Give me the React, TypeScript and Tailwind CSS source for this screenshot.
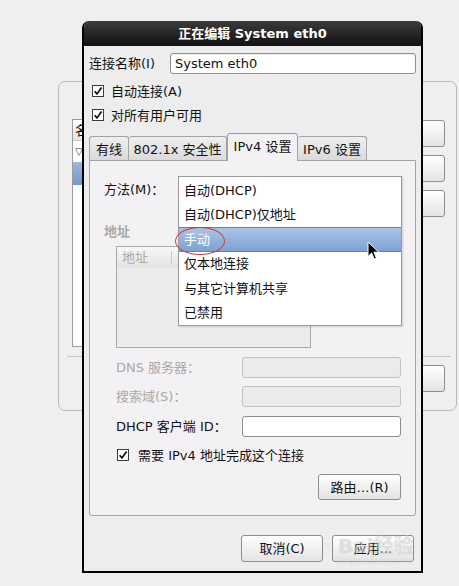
import React from "react";

function Check() {
  return (
    <span className="flex h-[12px] w-[12px] shrink-0 items-center justify-center border border-[#3c3c3c] bg-white">
      <svg width="10" height="10" viewBox="0 0 10 10">
        <path d="M1.6 5.2 L4 7.9 L8.6 1.6" fill="none" stroke="#111" strokeWidth="1.7" />
      </svg>
    </span>
  );
}

function Btn({ label, className = "" }: { label: string; className?: string }) {
  return (
    <div
      className={`flex items-center justify-center rounded-[3px] border border-[#8e8e8e] bg-gradient-to-b from-white to-[#e4e4e4] text-[13px] text-[#111] ${className}`}
    >
      {label}
    </div>
  );
}

const methods = ["自动(DHCP)", "自动(DHCP)仅地址", "手动", "仅本地连接", "与其它计算机共享", "已禁用"];

export default function App() {
  return (
    <div className="relative h-[586px] w-[459px] overflow-hidden bg-[#efefef] font-['DejaVu_Sans','Noto_Sans_CJK_SC',sans-serif] text-[13px] leading-none text-[#111]">
      {/* window behind the dialog */}
      <div className="pl-[58px] pt-[81px]">
        <div className="flex h-[330px] w-[399px] flex-col rounded-[7px] border border-[#b9b9b9]">
          <div className="flex pl-[13px] pt-[37px]">
            <div className="flex h-[228px] w-[300px] flex-col border border-[#9c9c9c] bg-white">
              <div className="flex h-[21px] items-center border-b border-[#c8c8c8] bg-gradient-to-b from-white to-[#e6e6e6] pl-[2px]">名</div>
              <div className="flex h-[21px] items-center pl-[2px] text-[10px] text-[#333]">▽</div>
              <div className="h-[23px] bg-gradient-to-b from-[#9bb8df] to-[#7398cc]" />
            </div>
            <div className="ml-auto mr-[11px] mt-px flex flex-col gap-[8px]">
              <Btn label="添加(A)" className="h-[27px] w-[90px]" />
              <Btn label="编辑..." className="h-[27px] w-[90px]" />
              <Btn label="删除..." className="h-[27px] w-[90px]" />
            </div>
          </div>
          <div className="ml-[8px] mr-[5px] mt-[9px] h-px bg-[#c6c6c6]" />
          <div className="mr-[11px] mt-[8px] flex justify-end">
            <Btn label="关闭(C)" className="h-[27px] w-[90px]" />
          </div>
        </div>
      </div>

      {/* dialog */}
      <div className="absolute left-[82px] top-[21px] flex h-[552px] w-[341px] flex-col overflow-hidden rounded-t-[7px] border-2 border-t-0 border-black bg-[#ededed]">
        <div className="flex h-[25px] shrink-0 items-center justify-center bg-gradient-to-b from-[#3c3c3c] to-[#121212] text-[13px] font-bold text-white">
          正在编辑 System eth0
        </div>
        <div className="flex flex-1 flex-col px-[5px]">
          <div className="mt-[7px] flex h-[21px] items-center">
            <span className="w-[81px]">连接名称(I)</span>
            <div className="flex h-[21px] flex-1 items-center rounded-[3px] border border-[#8e8e8e] bg-white pl-[4px] shadow-[inset_0_1px_1px_rgba(0,0,0,0.08)]">
              System eth0
            </div>
          </div>
          <div className="mt-[5px] flex h-[24px] items-center gap-[7px] pl-[3px]">
            <Check />
            <span>自动连接(A)</span>
          </div>
          <div className="flex h-[24px] items-center gap-[7px] pl-[3px]">
            <Check />
            <span>对所有用户可用</span>
          </div>

          {/* tabs */}
          <div className="mt-[6px] flex h-[28px] items-end">
            <div className="flex h-[25px] w-[40px] items-center justify-center rounded-t-[3px] border border-b-0 border-[#a3a3a3] bg-gradient-to-b from-[#efefef] to-[#d9d9d9]">有线</div>
            <div className="flex h-[25px] w-[98px] items-center justify-center rounded-t-[3px] border border-b-0 border-l-0 border-[#a3a3a3] bg-gradient-to-b from-[#efefef] to-[#d9d9d9]">802.1x 安全性</div>
            <div className="relative z-10 flex h-[28px] w-[71px] items-center justify-center rounded-t-[3px] border border-b-0 border-[#a3a3a3] border-t-[#7c9cc6] bg-[#f4f1f4] pb-[2px]">IPv4 设置</div>
            <div className="flex h-[25px] w-[69px] items-center justify-center rounded-t-[3px] border border-b-0 border-l-0 border-[#a3a3a3] bg-gradient-to-b from-[#efefef] to-[#d9d9d9]">IPv6 设置</div>
          </div>

          {/* tab panel */}
          <div className="relative -mt-px flex h-[356px] flex-col rounded-b-[3px] border border-[#a3a3a3] bg-[#f4f1f4] pl-[14px] pr-[14px]">
            <div className="mt-[15px] flex h-[26px] items-center">
              <span className="w-[74px]">方法(M)：</span>
              <div className="h-[26px] flex-1 rounded-[3px] border border-[#8e8e8e] bg-gradient-to-b from-white to-[#e4e4e4]" />
            </div>
            <div className="mt-[22px] h-[16px] font-bold leading-[16px] text-[#a9a9a9]">地址</div>
            <div className="ml-[12px] mt-[6px] flex h-[102px] w-[195px] flex-col border border-[#a9a9a9] bg-[#ececec]">
              <div className="flex h-[21px] items-center bg-gradient-to-b from-[#f7f7f7] to-[#e3e3e3] text-[#a9a9a9]">
                <span className="w-[55px] border-r border-[#c9c9c9] pl-[5px]">地址</span>
              </div>
            </div>
            <div className="ml-[12px] mt-[9px] flex h-[21px] items-center text-[#a9a9a9]">
              <span className="w-[126px]">DNS 服务器：</span>
              <div className="h-[21px] flex-1 rounded-[3px] border border-[#c2c2c2] bg-[#ebebeb]" />
            </div>
            <div className="ml-[12px] mt-[8px] flex h-[21px] items-center text-[#a9a9a9]">
              <span className="w-[126px]">搜索域(S)：</span>
              <div className="h-[21px] flex-1 rounded-[3px] border border-[#c2c2c2] bg-[#ebebeb]" />
            </div>
            <div className="ml-[12px] mt-[9px] flex h-[21px] items-center">
              <span className="w-[126px]">DHCP 客户端 ID：</span>
              <div className="h-[21px] flex-1 rounded-[3px] border border-[#8e8e8e] bg-white" />
            </div>
            <div className="ml-[13px] mt-[11px] flex h-[14px] items-center gap-[9px]">
              <Check />
              <span>需要 IPv4 地址完成这个连接</span>
            </div>
            <div className="mt-[12px] flex justify-end">
              <Btn label="路由…(R)" className="h-[26px] w-[83px]" />
            </div>
          </div>

          <div className="mt-[19px] flex justify-end gap-[9px] pr-[2px]">
            <Btn label="取消(C)" className="h-[27px] w-[82px]" />
            <Btn label="应用..." className="h-[27px] w-[82px]" />
          </div>
        </div>
      </div>

      {/* open combo popup */}
      <div className="absolute left-[178px] top-[176px] z-20 flex h-[150px] w-[224px] flex-col border border-[#9a9a9a] bg-white pt-[1px] shadow-[1px_1px_2px_rgba(0,0,0,0.15)]">
        {methods.map((m, i) => (
          <div
            key={m}
            className={`flex h-[24.5px] shrink-0 items-center pl-[5px] ${
              i === 2 ? "border-y border-[#5b82b8] bg-gradient-to-b from-[#aac4e6] to-[#7ea2d3] text-white" : ""
            }`}
          >
            {m}
          </div>
        ))}
      </div>

      {/* red mark */}
      <div className="absolute left-[175px] top-[227px] z-30 h-[28px] w-[50px] rounded-[50%] border border-[#d23b3b]" />

      {/* mouse pointer */}
      <svg className="absolute left-[367px] top-[241px] z-30" width="13" height="20" viewBox="0 0 13 20">
        <path d="M1 1 L1 15.5 L4.6 12 L7.2 18 L9.4 17 L6.9 11.2 L11.8 11.2 Z" fill="#000" stroke="#fff" strokeWidth="1" strokeLinejoin="round" />
      </svg>

      {/* watermark */}
      <div className="pointer-events-none absolute left-[338px] top-[536px] z-30 flex flex-col items-center">
        <span className="text-[20px] font-bold leading-none text-white/30 [text-shadow:0_0_1px_rgba(140,140,140,0.35)]">Bai经验</span>
        <span className="mt-[2px] text-[8px] leading-none text-white/40 [text-shadow:0_0_1px_rgba(140,140,140,0.3)]">jingyan.baidu.com</span>
      </div>
    </div>
  );
}
